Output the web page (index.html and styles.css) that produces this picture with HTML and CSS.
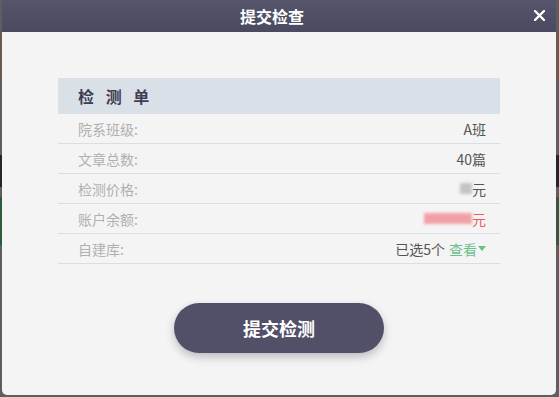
FILE: index.html
```html
<!DOCTYPE html>
<html lang="zh-CN">
<head>
    <meta charset="UTF-8">
    <title>提交检查</title>
    <link rel="stylesheet" href="styles.css">
</head>
<body>
    <div class="backdrop">
        <div class="strip strip-brown"></div>
        <div class="strip strip-dark"></div>
        <div class="strip strip-green"></div>
    </div>
    <div class="modal">
        <div class="modal-head">
            <span class="modal-title">提交检查</span>
            <svg class="modal-close" width="11" height="11" viewBox="0 0 11 11">
                <path d="M1 1 L10 10 M10 1 L1 10" stroke="#fff" stroke-width="2.4" stroke-linecap="round"/>
            </svg>
        </div>
        <div class="modal-body">
            <div class="sheet">
                <div class="sheet-head">检 测 单</div>
                <div class="sheet-row">
                    <span class="label">院系班级:</span>
                    <span class="value">A班</span>
                </div>
                <div class="sheet-row">
                    <span class="label">文章总数:</span>
                    <span class="value">40篇</span>
                </div>
                <div class="sheet-row">
                    <span class="label">检测价格:</span>
                    <span class="value"><span class="mask mask-grey"></span>元</span>
                </div>
                <div class="sheet-row">
                    <span class="label">账户余额:</span>
                    <span class="value red"><span class="mask mask-red"></span>元</span>
                </div>
                <div class="sheet-row">
                    <span class="label">自建库:</span>
                    <span class="value">已选5个 <span class="link">查看</span><span class="caret"></span></span>
                </div>
            </div>
            <div class="actions">
                <button class="submit">提交检测</button>
            </div>
        </div>
    </div>
</body>
</html>
```

FILE: styles.css
```css
html, body {
    margin: 0;
    height: 100%;
}
body {
    font-family: "Noto Sans CJK SC", "Noto Sans", sans-serif;
    background: #5e5e5e;
    position: relative;
    overflow: hidden;
}
.backdrop {
    position: absolute;
    inset: 0;
}
.strip {
    position: absolute;
    left: 0;
    right: 0;
}
.strip-brown {
    top: 32px;
    height: 48px;
    background: #6a5c4a;
}
.strip-dark {
    top: 155px;
    height: 32px;
    background: #25252e;
}
.strip-green {
    top: 197px;
    height: 48px;
    background: #2f5a3e;
}
.modal {
    position: absolute;
    left: 2px;
    top: 0;
    width: 554px;
    height: 395px;
    background: #f4f4f4;
    border-radius: 0 0 5px 5px;
    overflow: hidden;
}
.modal-head {
    height: 32px;
    background: linear-gradient(#56556c, #4a4960);
    display: flex;
    align-items: center;
    justify-content: center;
    position: relative;
    padding-right: 14px;
}
.modal-title {
    color: #fff;
    font-size: 16px;
    font-weight: bold;
    line-height: 32px;
}
.modal-close {
    position: absolute;
    right: 11px;
    top: 10px;
}
.modal-body {
    padding: 46px 56px 0;
}
.sheet-head {
    height: 36px;
    line-height: 36px;
    background: #dae0e8;
    padding-left: 20px;
    font-size: 16px;
    font-weight: bold;
    color: #3e3e50;
    letter-spacing: 4px;
}
.sheet-row {
    display: flex;
    justify-content: space-between;
    align-items: center;
    height: 29px;
    border-bottom: 1px solid #d8dde6;
    padding: 0 14px 0 20px;
    font-size: 14px;
}
.label {
    color: #b0b0b0;
}
.value {
    color: #555;
    display: flex;
    align-items: center;
}
.value.red {
    color: #f05a64;
}
.mask {
    display: inline-block;
    height: 11px;
    filter: blur(1.5px);
}
.mask-grey {
    width: 12px;
    background: #c4c4c4;
}
.mask-red {
    width: 48px;
    background: #f2a0a8;
}
.link {
    color: #6cc08c;
    margin-left: 4px;
}
.caret {
    width: 0;
    height: 0;
    border-left: 4px solid transparent;
    border-right: 4px solid transparent;
    border-top: 5px solid #6cc08c;
    margin-left: 1px;
}
.actions {
    display: flex;
    justify-content: center;
    padding-top: 39px;
}
.submit {
    width: 210px;
    height: 50px;
    border: none;
    border-radius: 25px;
    background: #525068;
    color: #fff;
    font-family: inherit;
    font-size: 18px;
    font-weight: bold;
    box-shadow: 0 4px 8px rgba(60, 60, 90, 0.3);
}
```
